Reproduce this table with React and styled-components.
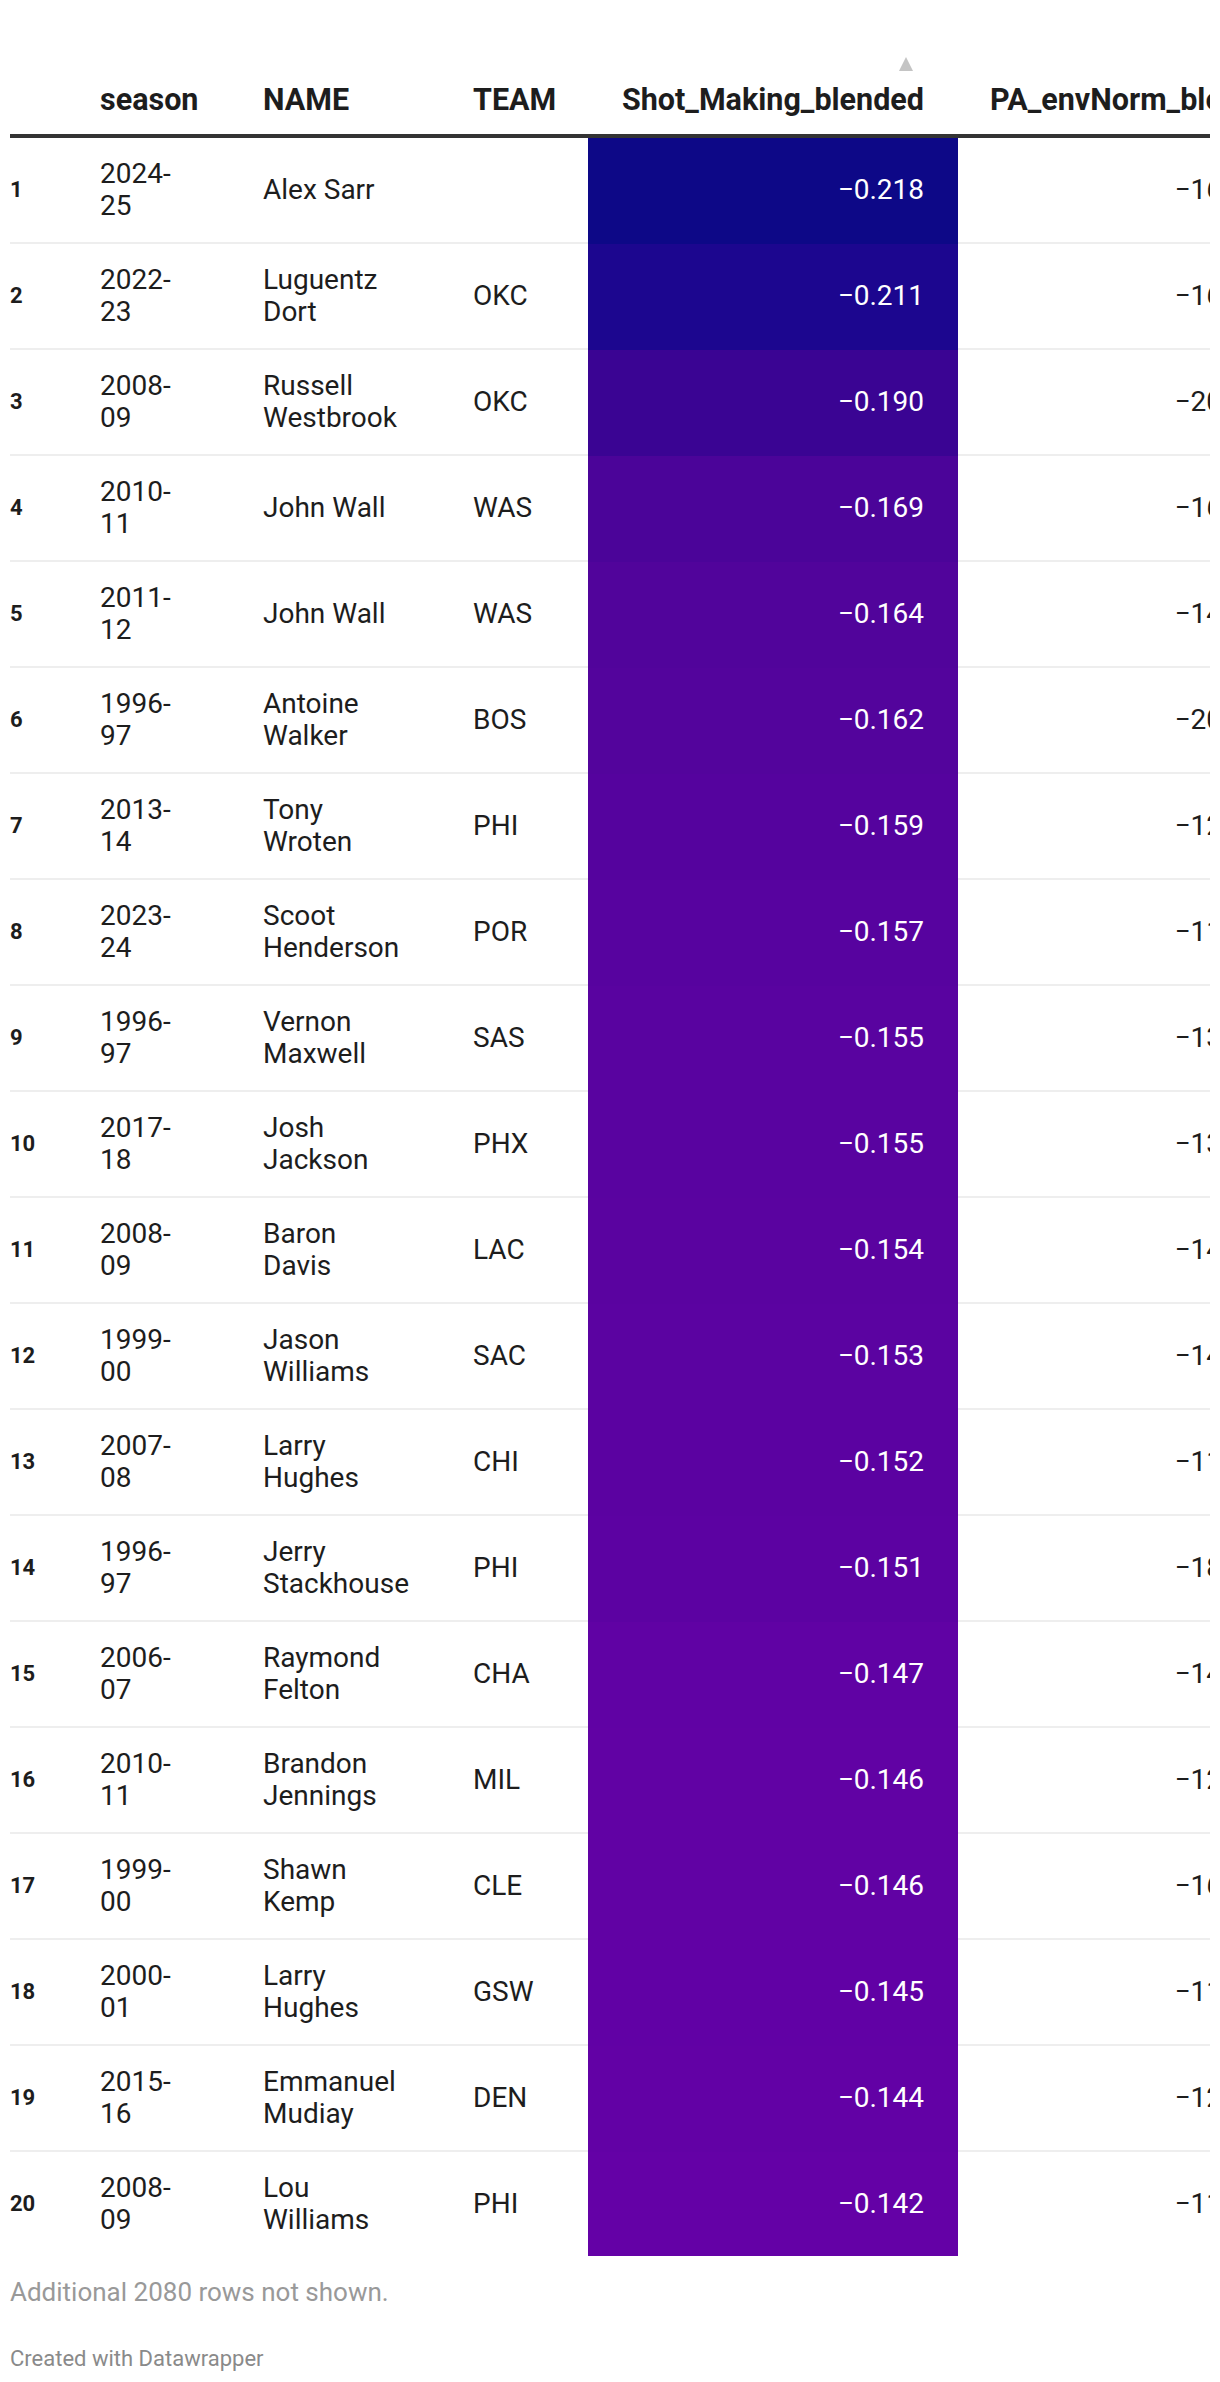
import React from "react";
import styled, { createGlobalStyle } from "styled-components";

const GlobalStyle = createGlobalStyle`
  *, *::before, *::after { box-sizing: border-box; }
  html, body { margin: 0; padding: 0; background: #ffffff; }
  body { font-family: Roboto, "Liberation Sans", Arial, sans-serif; color: #1d1d1d; }
`;

const Page = styled.div`
  padding: 0 10px;
  width: 1220px;
`;

const Scroller = styled.div`
  width: 1200px;
  overflow: hidden;
`;

const Table = styled.table`
  border-collapse: separate;
  border-spacing: 0;
  table-layout: fixed;
  width: 1288px;
`;

const HeadCell = styled.th`
  position: relative;
  font-size: 30.5px;
  font-weight: 700;
  line-height: 32px;
  color: #1d1d1d;
  text-align: ${(p) => (p.$right ? "right" : "left")};
  white-space: nowrap;
  vertical-align: bottom;
  padding: 84px ${(p) => p.$padRight || 0}px 18px ${(p) => p.$padLeft || 0}px;
  border-bottom: 4px solid #333333;
`;

const SortArrow = styled.span`
  position: absolute;
  top: 57px;
  right: 45px;
  width: 0;
  height: 0;
  border-left: 7.5px solid transparent;
  border-right: 7.5px solid transparent;
  border-bottom: 14px solid #c4c4c4;
`;

const Row = styled.tr`
  &:last-child td { border-bottom: none; }
`;

const Cell = styled.td`
  font-size: 28px;
  line-height: 32px;
  color: #1d1d1d;
  vertical-align: middle;
  padding: 20px ${(p) => p.$padRight || 0}px 20px 0;
  border-bottom: 2px solid #eeeeee;
  text-align: ${(p) => (p.$right ? "right" : "left")};
`;

const RankCell = styled(Cell)`
  font-size: 22px;
  font-weight: 700;
  padding-left: 0;
`;

const NameCell = styled(Cell)`
  overflow-wrap: normal;
`;

const HeatCell = styled(Cell)`
  color: #ffffff;
  text-align: right;
  padding-right: 34px;
  background: ${(p) => p.$bg};
  border-bottom-color: ${(p) => p.$bg};
`;

const NumCell = styled(Cell)`
  text-align: right;
  white-space: nowrap;
  padding-right: 53px;
`;

const Notes = styled.div`
  margin-top: 20px;
  font-size: 26px;
  line-height: 32px;
  color: #999999;
`;

const Credit = styled.div`
  margin-top: 38px;
  font-size: 22px;
  line-height: 26px;
  color: #8a8a8a;
`;

const rows = [
  ["2024-25", "Alex Sarr", "", -0.218, "16.4"],
  ["2022-23", "Luguentz Dort", "OKC", -0.211, "16.1"],
  ["2008-09", "Russell Westbrook", "OKC", -0.19, "20.3"],
  ["2010-11", "John Wall", "WAS", -0.169, "16.5"],
  ["2011-12", "John Wall", "WAS", -0.164, "14.2"],
  ["1996-97", "Antoine Walker", "BOS", -0.162, "20.1"],
  ["2013-14", "Tony Wroten", "PHI", -0.159, "12.7"],
  ["2023-24", "Scoot Henderson", "POR", -0.157, "11.8"],
  ["1996-97", "Vernon Maxwell", "SAS", -0.155, "13.4"],
  ["2017-18", "Josh Jackson", "PHX", -0.155, "13.9"],
  ["2008-09", "Baron Davis", "LAC", -0.154, "14.6"],
  ["1999-00", "Jason Williams", "SAC", -0.153, "14.3"],
  ["2007-08", "Larry Hughes", "CHI", -0.152, "11.2"],
  ["1996-97", "Jerry Stackhouse", "PHI", -0.151, "18.0"],
  ["2006-07", "Raymond Felton", "CHA", -0.147, "14.8"],
  ["2010-11", "Brandon Jennings", "MIL", -0.146, "12.5"],
  ["1999-00", "Shawn Kemp", "CLE", -0.146, "16.9"],
  ["2000-01", "Larry Hughes", "GSW", -0.145, "11.6"],
  ["2015-16", "Emmanuel Mudiay", "DEN", -0.144, "12.2"],
  ["2008-09", "Lou Williams", "PHI", -0.142, "11.4"],
];

const anchors = [
  [-0.218, [13, 8, 135]],
  [-0.211, [28, 6, 143]],
  [-0.19, [58, 4, 147]],
  [-0.169, [75, 4, 153]],
  [-0.164, [81, 4, 155]],
  [-0.142, [100, 1, 166]],
];

function heatColor(v) {
  for (let i = 0; i < anchors.length - 1; i++) {
    const [v0, c0] = anchors[i];
    const [v1, c1] = anchors[i + 1];
    if (v <= v1 + 1e-9) {
      const t = Math.max(0, Math.min(1, (v - v0) / (v1 - v0)));
      const c = c0.map((x, k) => Math.round(x + (c1[k] - x) * t));
      return `rgb(${c[0]}, ${c[1]}, ${c[2]})`;
    }
  }
  const c = anchors[anchors.length - 1][1];
  return `rgb(${c[0]}, ${c[1]}, ${c[2]})`;
}

const fmt = (v) => "\u2212" + Math.abs(v).toFixed(3);

function Season({ value }) {
  const [a, b] = value.split("-");
  return (
    <>
      {a}-<wbr />
      {b}
    </>
  );
}

export default function App() {
  return (
    <>
      <GlobalStyle />
      <Page>
        <Scroller>
          <Table>
            <colgroup>
              <col style={{ width: 90 }} />
              <col style={{ width: 163 }} />
              <col style={{ width: 210 }} />
              <col style={{ width: 115 }} />
              <col style={{ width: 370 }} />
              <col style={{ width: 340 }} />
            </colgroup>
            <thead>
              <tr>
                <HeadCell />
                <HeadCell>season</HeadCell>
                <HeadCell>NAME</HeadCell>
                <HeadCell>TEAM</HeadCell>
                <HeadCell $right $padRight={34}>
                  <SortArrow />
                  Shot_Making_blended
                </HeadCell>
                <HeadCell $padLeft={32}>PA_envNorm_blended</HeadCell>
              </tr>
            </thead>
            <tbody>
              {rows.map(([season, name, team, shot, pa], i) => (
                <Row key={i}>
                  <RankCell>{i + 1}</RankCell>
                  <Cell $padRight={73}>
                    <Season value={season} />
                  </Cell>
                  <NameCell $padRight={68}>{name}</NameCell>
                  <Cell>{team}</Cell>
                  <HeatCell $bg={heatColor(shot)}>{fmt(shot)}</HeatCell>
                  <NumCell>{"\u2212" + pa}</NumCell>
                </Row>
              ))}
            </tbody>
          </Table>
        </Scroller>
        <Notes>Additional 2080 rows not shown.</Notes>
        <Credit>Created with Datawrapper</Credit>
      </Page>
    </>
  );
}
